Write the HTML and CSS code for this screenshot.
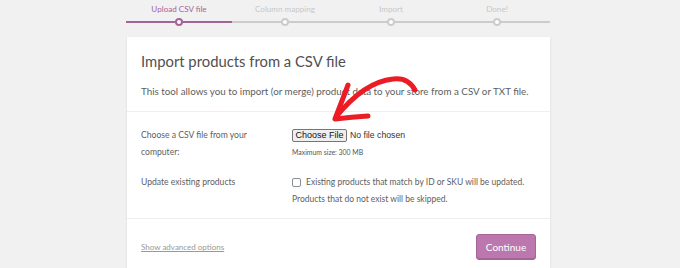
FILE: index.html
```html
<!DOCTYPE html>
<html>
<head>
<meta charset="utf-8">
<link rel="stylesheet" href="styles.css">
</head>
<body>
<div class="wrap">
  <ol class="steps">
    <li class="step active"><span class="label">Upload CSV file</span><span class="dot"></span></li>
    <li class="step"><span class="label">Column mapping</span><span class="dot"></span></li>
    <li class="step"><span class="label">Import</span><span class="dot"></span></li>
    <li class="step"><span class="label">Done!</span><span class="dot"></span></li>
  </ol>
  <div class="card">
    <header class="card-head">
      <h2 class="title">Import products from a CSV file</h2>
      <p class="desc">This tool allows you to import (or merge) product data to your store from a CSV or TXT file.</p>
    </header>
    <section class="rows">
      <div class="row">
        <div class="row-label">Choose a CSV file from your computer:</div>
        <div class="row-field">
          <div class="file"><button class="file-btn" type="button">Choose File</button><span class="file-none">No file chosen</span></div>
          <div class="maxsize">Maximum size: 300 MB</div>
        </div>
      </div>
      <div class="row">
        <div class="row-label">Update existing products</div>
        <div class="row-field">
          <div class="check-line"><span class="checkbox"></span><span>Existing products that match by ID or SKU will be updated.</span></div>
          <div class="check-note">Products that do not exist will be skipped.</div>
        </div>
      </div>
    </section>
    <footer class="card-foot">
      <a class="adv" href="#">Show advanced options</a>
      <button class="continue" type="button">Continue</button>
    </footer>
  </div>
</div>
<svg class="arrow" width="680" height="268" viewBox="0 0 680 268">
  <path d="M415 90 Q408 77 393 79 Q364 82 336 117" fill="none" stroke="#ec1c24" stroke-width="5" stroke-linecap="round" stroke-linejoin="round"/>
  <path d="M348 85 Q342 101 335 119 Q352 117 368 116" fill="none" stroke="#ec1c24" stroke-width="5" stroke-linecap="round" stroke-linejoin="round"/>
</svg>
</body>
</html>
```
FILE: styles.css
```css
* { box-sizing: border-box; }
html, body { margin: 0; padding: 0; }
body {
  background: #f1f1f1;
  font-family: Lato, "Open Sans", sans-serif;
  color: #555;
  width: 680px;
  height: 268px;
  overflow: hidden;
  position: relative;
}
.wrap {
  width: 424px;
  margin-left: 126px;
}
.steps {
  list-style: none;
  margin: 0;
  padding: 3px 0 0;
  display: flex;
  height: 37px;
}
.step {
  flex: 1;
  display: flex;
  flex-direction: column;
  align-items: center;
  position: relative;
  border-bottom: 2px solid #ccc;
  height: 20px;
  color: #c8c8c8;
  font-size: 8.1px;
}
.step.active { border-bottom-color: #a46497; color: #a46497; }
.label { line-height: 13px; }
.dot {
  position: absolute;
  bottom: -5px;
  left: 50%;
  margin-left: -4px;
  width: 8px;
  height: 8px;
  border-radius: 50%;
  background: #fff;
  border: 2px solid #ccc;
}
.step.active .dot { border-color: #a46497; }
.card {
  background: #fff;
  box-shadow: 0 1px 2px rgba(0,0,0,0.12);
  height: 231px;
  margin-left: 1px;
}
.card-head {
  padding: 14px 14px 0;
  border-bottom: 1px solid #eee;
  height: 75px;
}
.title {
  margin: 0;
  font-weight: 400;
  font-size: 14.8px;
  line-height: 20px;
  color: #505050;
}
.desc {
  margin: 13px 0 0;
  font-size: 9.8px;
  color: #5e5e5e;
  line-height: 14px;
}
.rows {
  padding: 15px 14px 0;
  border-bottom: 1px solid #eee;
  height: 107px;
}
.row { display: flex; }
.row + .row { margin-top: 13px; }
.row-label {
  width: 151px;
  font-size: 8.6px;
  line-height: 17px;
  color: #5e5e5e;
  padding-right: 30px;
}
.row-field { font-size: 8.5px; color: #5e5e5e; }
.file { display: flex; align-items: center; height: 14px; margin-top: 1px; }
.file-btn {
  font-family: "Liberation Sans", Arial, sans-serif;
  font-size: 9px;
  height: 13px;
  width: 55px;
  padding: 0;
  background: #efefef;
  border: 1px solid #767676;
  border-radius: 2px;
  color: #111;
  line-height: 11px;
}
.file-none {
  font-family: "Liberation Sans", Arial, sans-serif;
  margin-left: 3px;
  color: #333;
  font-size: 8.7px;
}
.maxsize { font-size: 6.9px; margin-top: 6px; color: #555; }
.check-line { display: flex; align-items: center; line-height: 17px; }
.checkbox {
  width: 9px;
  height: 9px;
  border: 1px solid #8c8f94;
  border-radius: 2px;
  margin-right: 5px;
  background: #fff;
}
.check-note { line-height: 17px; }
.card-foot {
  display: flex;
  justify-content: space-between;
  align-items: center;
  padding: 15px 14px 0 14px;
}
.adv {
  font-size: 8px;
  color: #999;
  text-decoration: underline;
}
.continue {
  width: 60px;
  height: 26px;
  background: #bb77ae;
  border: 1px solid #a36597;
  border-radius: 3px;
  color: #fff;
  font-family: Lato, "Open Sans", sans-serif;
  font-size: 10px;
  box-shadow: inset 0 -1px 0 #a36597;
}
.arrow {
  position: absolute;
  left: 0;
  top: 0;
  pointer-events: none;
}
```
